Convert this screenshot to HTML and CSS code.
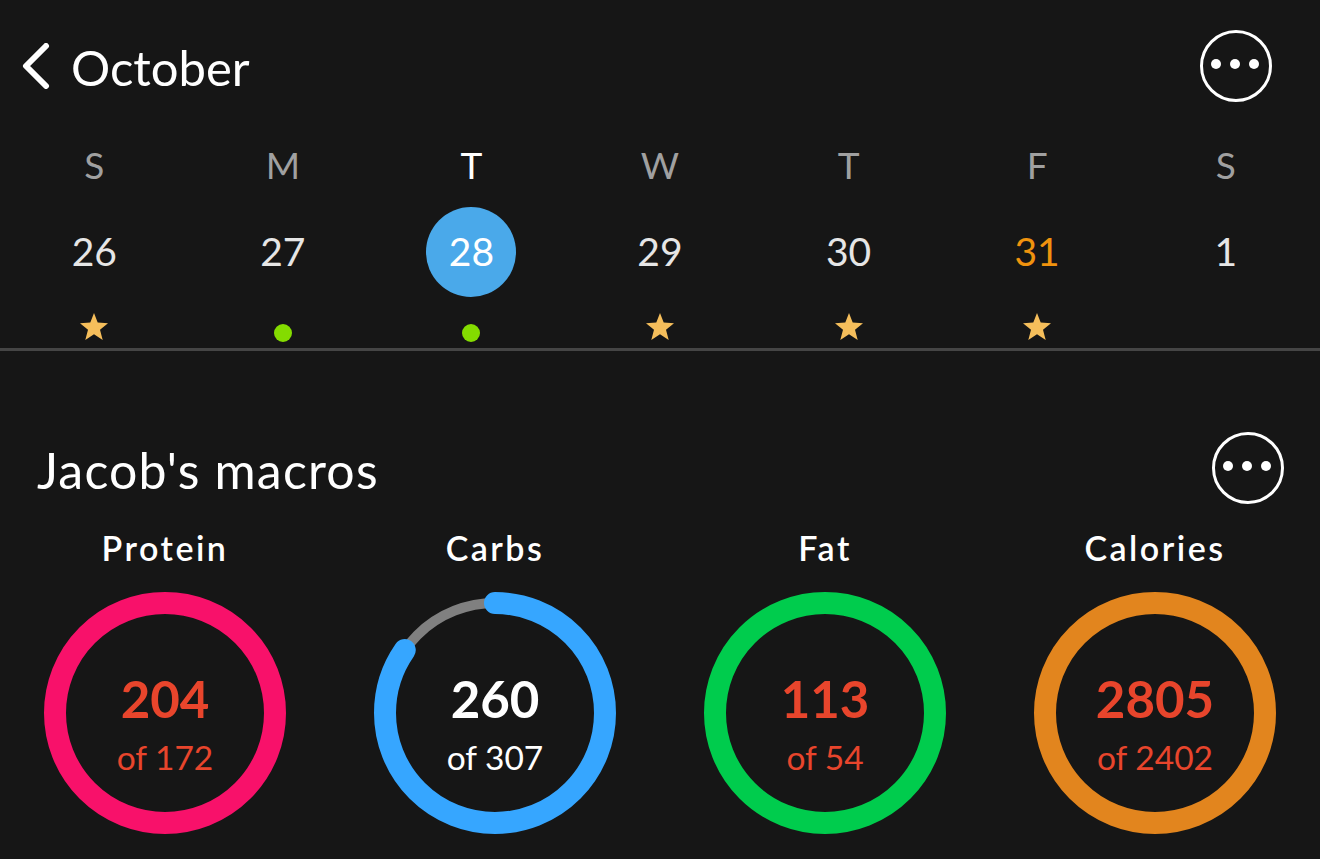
FILE: index.html
```html
<!DOCTYPE html>
<html lang="en">
<head>
    <meta charset="UTF-8">
    <title>October</title>
    <link rel="stylesheet" href="styles.css">
</head>
<body>
    <header class="topbar">
        <div class="month">
            <svg class="chevron" width="30" height="46" viewBox="0 0 30 46"><path d="M25 3 L5 23 L25 43" fill="none" stroke="#fff" stroke-width="6" stroke-linecap="round" stroke-linejoin="round"/></svg>
            <h1>October</h1>
        </div>
        <button class="more"><i></i><i></i><i></i></button>
    </header>

    <div class="week">
        <div class="day"><span class="letter">S</span><span class="date">26</span><span class="mark"><svg class="star" viewBox="0 0 28 28"><path d="M14 0 L17.7 9.6 L28 10.2 L20 16.8 L22.7 27 L14 21.3 L5.3 27 L8 16.8 L0 10.2 L10.3 9.6 Z"/></svg></span></div>
        <div class="day"><span class="letter">M</span><span class="date">27</span><span class="mark"><i class="dot"></i></span></div>
        <div class="day"><span class="letter today">T</span><span class="date selected">28</span><span class="mark"><i class="dot"></i></span></div>
        <div class="day"><span class="letter">W</span><span class="date">29</span><span class="mark"><svg class="star" viewBox="0 0 28 28"><path d="M14 0 L17.7 9.6 L28 10.2 L20 16.8 L22.7 27 L14 21.3 L5.3 27 L8 16.8 L0 10.2 L10.3 9.6 Z"/></svg></span></div>
        <div class="day"><span class="letter">T</span><span class="date">30</span><span class="mark"><svg class="star" viewBox="0 0 28 28"><path d="M14 0 L17.7 9.6 L28 10.2 L20 16.8 L22.7 27 L14 21.3 L5.3 27 L8 16.8 L0 10.2 L10.3 9.6 Z"/></svg></span></div>
        <div class="day"><span class="letter">F</span><span class="date orange">31</span><span class="mark"><svg class="star" viewBox="0 0 28 28"><path d="M14 0 L17.7 9.6 L28 10.2 L20 16.8 L22.7 27 L14 21.3 L5.3 27 L8 16.8 L0 10.2 L10.3 9.6 Z"/></svg></span></div>
        <div class="day"><span class="letter">S</span><span class="date">1</span><span class="mark"></span></div>
    </div>

    <section class="macros">
        <div class="macros-head">
            <h2>Jacob's macros</h2>
            <button class="more"><i></i><i></i><i></i></button>
        </div>
        <div class="rings">
            <div class="macro over">
                <h3>Protein</h3>
                <div class="ring">
                    <svg width="242" height="242" viewBox="0 0 242 242"><circle cx="121" cy="121" r="110" fill="none" stroke="#f8116a" stroke-width="22"/></svg>
                    <div class="value"><b>204</b><span>of 172</span></div>
                </div>
            </div>
            <div class="macro">
                <h3>Carbs</h3>
                <div class="ring">
                    <svg width="242" height="242" viewBox="0 0 242 242">
                        <circle cx="121" cy="121" r="110" fill="none" stroke="#808080" stroke-width="10"/>
                        <circle cx="121" cy="121" r="110" fill="none" stroke="#36a6ff" stroke-width="22" stroke-linecap="round" pathLength="307" stroke-dasharray="260 307" transform="rotate(-90 121 121)"/>
                    </svg>
                    <div class="value"><b>260</b><span>of 307</span></div>
                </div>
            </div>
            <div class="macro over">
                <h3>Fat</h3>
                <div class="ring">
                    <svg width="242" height="242" viewBox="0 0 242 242"><circle cx="121" cy="121" r="110" fill="none" stroke="#00cc4d" stroke-width="22"/></svg>
                    <div class="value"><b>113</b><span>of 54</span></div>
                </div>
            </div>
            <div class="macro over">
                <h3>Calories</h3>
                <div class="ring">
                    <svg width="242" height="242" viewBox="0 0 242 242"><circle cx="121" cy="121" r="110" fill="none" stroke="#e2851e" stroke-width="22"/></svg>
                    <div class="value"><b>2805</b><span>of 2402</span></div>
                </div>
            </div>
        </div>
    </section>
</body>
</html>
```

FILE: styles.css
```css
html, body {
    margin: 0;
    height: 859px;
    overflow: hidden;
    background-color: #161616;
    color: #fff;
    font-family: "Lato", sans-serif;
}

h1, h2, h3 {
    margin: 0;
}

.topbar {
    display: flex;
    justify-content: space-between;
    align-items: center;
    height: 72px;
    padding: 30px 48px 0 21px;
}

.month {
    display: flex;
    align-items: center;
    gap: 20px;
}

h1 {
    padding-top: 2px;
    font-size: 49px;
    font-weight: 400;
    line-height: 72px;
}

.more {
    display: flex;
    justify-content: center;
    align-items: center;
    gap: 9px;
    box-sizing: border-box;
    width: 72px;
    height: 72px;
    padding: 0 2px 4px 0;
    background: none;
    border: 3px solid #fff;
    border-radius: 50%;
}

.more i {
    width: 10px;
    height: 10px;
    background-color: #fff;
    border-radius: 50%;
}

.week {
    display: grid;
    grid-template-columns: repeat(7, 1fr);
    height: 246px;
    border-bottom: 3px solid #454545;
}

.day {
    display: flex;
    flex-direction: column;
    align-items: center;
}

.letter {
    margin-top: 42px;
    font-size: 37px;
    font-weight: 400;
    line-height: 42px;
    color: #a0a0a0;
}

.letter.today {
    color: #fff;
}

.date {
    display: flex;
    justify-content: center;
    align-items: center;
    width: 90px;
    height: 88px;
    padding-bottom: 2px;
    margin-top: 21px;
    font-size: 39px;
    font-weight: 400;
    color: #e6e6e6;
}

.date.selected {
    background-color: #4aa9ea;
    border-radius: 50%;
    color: #fff;
}

.date.orange {
    color: #f0930e;
}

.mark {
    display: flex;
    justify-content: center;
    align-items: flex-end;
    height: 45px;
}

.star {
    width: 28px;
    height: 28px;
    margin-bottom: 1px;
    fill: #f5be5b;
}

.dot {
    width: 18px;
    height: 18px;
    background-color: #84dc00;
    border-radius: 50%;
}

.macros {
    padding-top: 81px;
}

.macros-head {
    display: flex;
    justify-content: space-between;
    align-items: center;
    padding: 0 36px 0 37px;
}

h2 {
    padding-top: 4px;
    font-size: 50px;
    font-weight: 400;
    letter-spacing: 1.2px;
}

.rings {
    display: grid;
    grid-template-columns: repeat(4, 330px);
    margin-top: 22px;
}

.macro {
    display: flex;
    flex-direction: column;
    align-items: center;
}

h3 {
    font-size: 34px;
    font-weight: 600;
    line-height: 44px;
    letter-spacing: 2.5px;
}

.ring {
    display: grid;
    margin-top: 22px;
}

.ring svg, .value {
    grid-area: 1 / 1;
}

.value {
    display: flex;
    flex-direction: column;
    justify-content: center;
    align-items: center;
    padding-top: 29px;
    box-sizing: border-box;
}

.value b {
    font-size: 51px;
    font-weight: 700;
    line-height: 58px;
}

.value span {
    font-size: 33.5px;
    font-weight: 400;
    line-height: 58px;
}

.over .value {
    color: #e8452c;
}
```
